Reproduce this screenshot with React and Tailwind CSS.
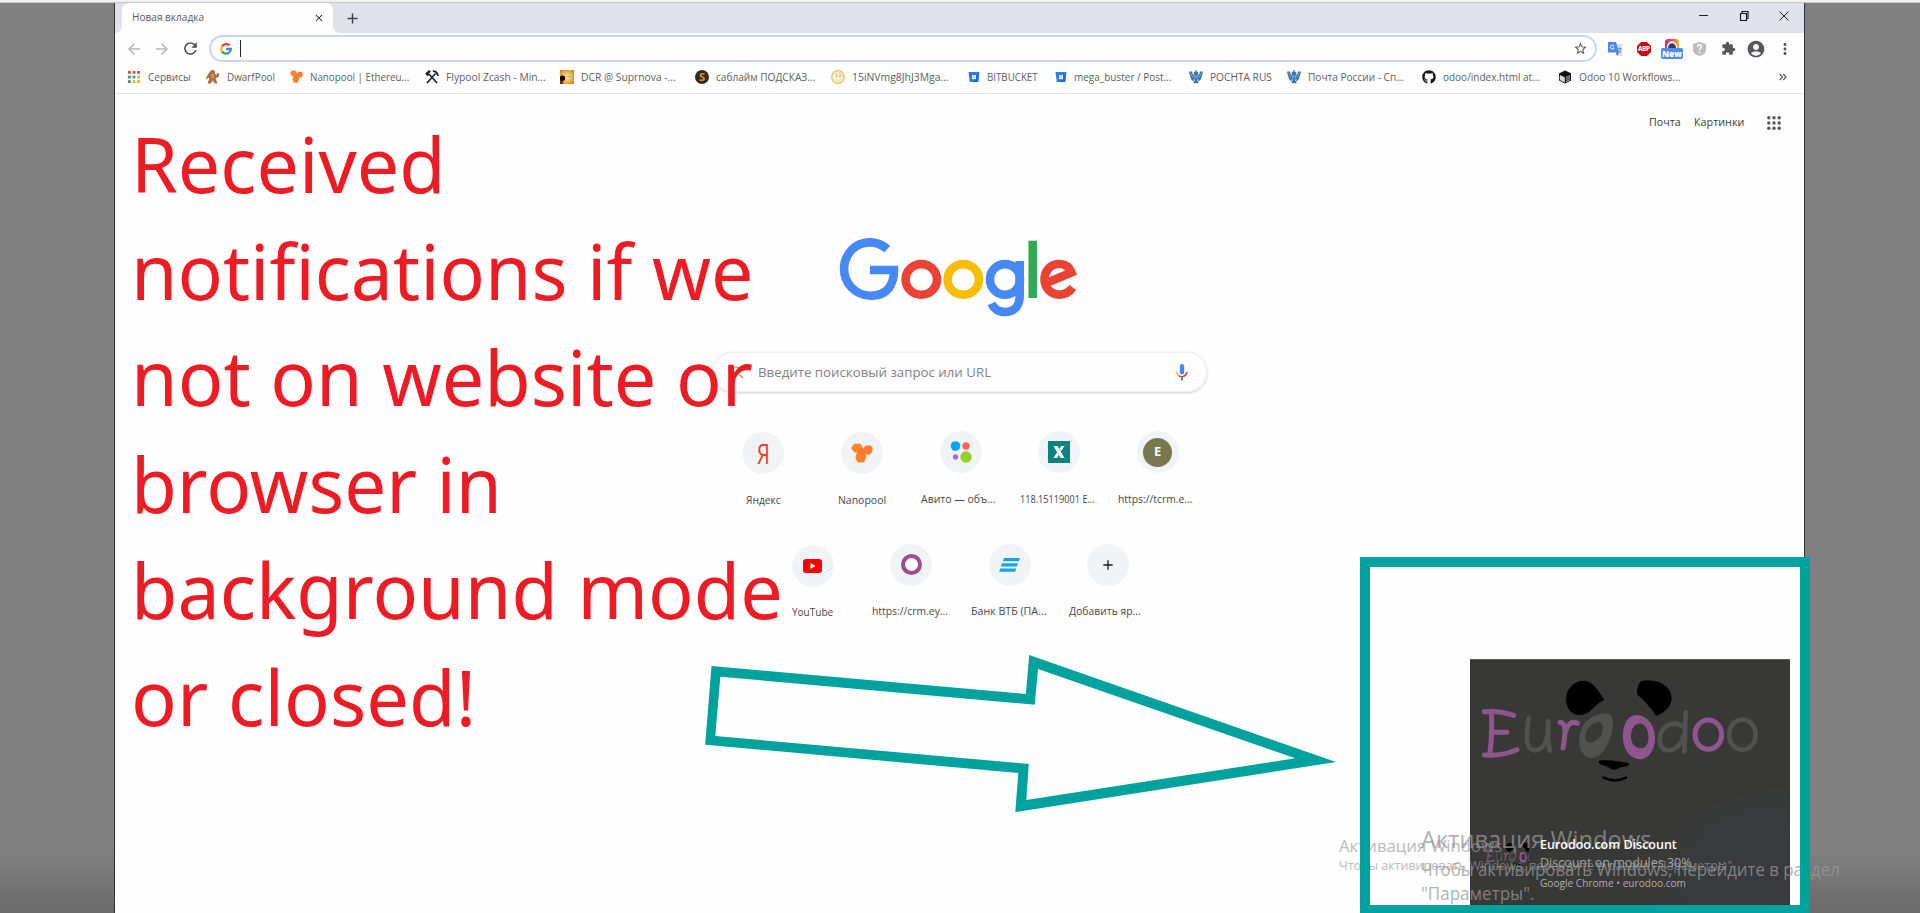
import { useLayoutEffect, useRef } from "react";
import {
  MdArrowBack,
  MdArrowForward,
  MdRefresh,
  MdStarBorder,
  MdExtension,
  MdAccountCircle,
  MdMoreVert,
  MdClose,
  MdAdd,
  MdSearch,
} from "react-icons/md";
import { FaGithub } from "react-icons/fa";

// One line of text, stretched sideways to the width its class gives.
function Fit({ className = "", children }) {
  const box = useRef(null);
  const inner = useRef(null);
  useLayoutEffect(() => {
    const ratio = box.current.getBoundingClientRect().width / inner.current.offsetWidth;
    inner.current.style.transform = `scaleX(${ratio})`;
  }, []);
  return (
    <span ref={box} className={`block shrink-0 whitespace-nowrap ${className}`}>
      <span ref={inner} className="inline-block origin-left">
        {children}
      </span>
    </span>
  );
}

function AppsColor() {
  const c = ["#e24a3b", "#e24a3b", "#e24a3b", "#3a9f58", "#3f87f0", "#efb213", "#3a9f58", "#efb213", "#efb213"];
  return (
    <svg viewBox="0 0 14 14" className="size-[14px]">
      {c.map((f, i) => (
        <rect key={i} x={1 + (i % 3) * 4.6} y={1 + Math.floor(i / 3) * 4.6} width="2.8" height="2.8" fill={f} />
      ))}
    </svg>
  );
}

function Dwarf() {
  return (
    <svg viewBox="0 0 14 14" className="size-[14px]">
      <path
        d="M4 1.500L5.500 0h2L9 1.500V4l1.500 1 .5-2 2 .5V6l-1.500 1.500L9.500 8l2 5.500h-3L7 10.500 4.500 13.500H1.500l2-5.500-1.500 0-1.500 1.500L0 8l2-3.500z"
        fill="#a8713f"
      />
      <path d="M5 4h3v4H5z" fill="#c9955d" />
    </svg>
  );
}

function Nano({ className }) {
  return (
    <svg viewBox="0 0 20 20" className={className} preserveAspectRatio="none">
      <path d="M3 .8h5.500L11 5l-2 4.500H3L0 5z" fill="#f98432" />
      <path d="M13 2.500h5l2 3.500-2 5.500h-5.500l-2-4z" fill="#ff7d2a" />
      <path d="M5.500 9h7l1.500 4.500-2 6H6l-2-4.500z" fill="#fc7f2c" />
      <path d="M8 4.500l5 1.500-2 6-5-3z" fill="#ff7a24" />
    </svg>
  );
}

function Hammers() {
  return (
    <svg viewBox="0 0 14 14" className="size-[14px]" stroke="#222" fill="none">
      <path d="M2 13L10.500 3.500M12 13L4 4" strokeWidth="1.700" />
      <path d="M1 4.500L5 .8M1.500 3.500l2 2" strokeWidth="2.400" />
      <path d="M7.800 1.200c2.500-.4 4.800 1.600 5.200 4.800" strokeWidth="1.700" />
    </svg>
  );
}

function Eclipse() {
  return (
    <svg viewBox="0 0 14 14" className="size-[14px]">
      <defs>
        <radialGradient id="glow" cx=".5" cy=".5" r=".7">
          <stop offset="0" stopColor="#fff2bd" />
          <stop offset=".5" stopColor="#efb450" />
          <stop offset="1" stopColor="#cc7614" />
        </radialGradient>
      </defs>
      <rect width="14" height="14" fill="url(#glow)" />
      <path d="M0 8h3v6H0z" fill="#6b3310" />
      <circle cx="2.500" cy="8.300" r="2.700" fill="#160b04" />
      <path d="M6 6.500h6" stroke="#b9a06c" strokeWidth=".8" />
    </svg>
  );
}

function Sublime() {
  return (
    <span className="flex size-[14px] items-center justify-center rounded-full bg-[#2c2b27] text-[11px] leading-none font-bold text-[#f08c22]">
      S
    </span>
  );
}

function Coin() {
  return (
    <svg viewBox="0 0 14 14" className="size-[14px]" fill="none" stroke="#ecbe5a">
      <circle cx="7" cy="7" r="6.300" strokeWidth="1.200" />
      <circle cx="7" cy="7" r="4.800" strokeWidth=".5" />
      <path d="M5.300 3.800v3.200M8.700 3.800v3.200M4.500 4h1.700v3H4.500M8 4h1.700v3H8M4.200 9c1.500 1.700 4.100 1.700 5.600 0" strokeWidth=".9" />
    </svg>
  );
}

function Bucket() {
  return (
    <svg viewBox="0 0 14 14" className="size-[14px]">
      <path d="M1.500 2h11l-1.300 10H2.800z" fill="#2a7cf2" />
      <path d="M9.500 5h2.600l-.9 7H6z" fill="#1761d6" opacity=".7" />
      <rect x="5" y="5.200" width="4" height="4" fill="#f4f8ff" />
      <rect x="6" y="6.200" width="1.800" height="2" fill="#a9c9fa" />
    </svg>
  );
}

function Eagle() {
  return (
    <svg viewBox="0 0 14 14" className="size-[14px]" stroke="#2f6fae" fill="none">
      <path d="M.8 1.500c.3 4 1.500 6 3.800 7.500M2.300 1.500c.3 3 1 4.500 2.700 6M13.200 1.500c-.3 4-1.500 6-3.800 7.500M11.700 1.500c-.3 3-1 4.500-2.700 6M2 6.500c.5 2.500 1.500 3.500 2.800 4M12 6.500c-.5 2.500-1.500 3.500-2.800 4" strokeWidth="1.400" />
      <path d="M7 .3v13M5 2.300l1.300 1.500M9 2.300L7.700 3.800M4.800 13l2.200-3 2.200 3" strokeWidth="1.500" />
      <path d="M5 4.500h4v4L7 10 5 8.500z" strokeWidth="1.200" />
    </svg>
  );
}

function Cube() {
  return (
    <svg viewBox="0 0 14 14" className="size-[14px]">
      <path d="M7 .6l6 2.600v7.200L7.200 13.500 1 10.600V3.400z" fill="#111" />
      <path d="M1.800 5l5 2.200v5.200l-5-2.300z" fill="#d9d9d9" />
      <path d="M8 7.500l4.200-2M8 9.500l4.200-2M8 11.500l4.200-2" stroke="#eee" strokeWidth=".8" />
    </svg>
  );
}

const bookmarks = [
  { cell: "w-[79px]", text: "w-[43px]", label: "Сервисы", icon: <AppsColor /> },
  { cell: "w-[83px]", text: "w-[48px]", label: "DwarfPool", icon: <Dwarf /> },
  { cell: "w-[136px]", text: "w-[99px]", label: "Nanopool | Ethereu...", icon: <Nano className="size-[13px]" /> },
  { cell: "w-[135px]", text: "w-[100px]", label: "Flypool Zcash - Min...", icon: <Hammers /> },
  { cell: "w-[135px]", text: "w-[95px]", label: "DCR @ Suprnova -...", icon: <Eclipse /> },
  { cell: "w-[136px]", text: "w-[99px]", label: "саблайм ПОДСКАЗ...", icon: <Sublime /> },
  { cell: "w-[135.5px]", text: "w-[97px]", label: "15iNVmg8JhJ3Mga...", icon: <Coin /> },
  { cell: "w-[87px]", text: "w-[51px]", label: "BITBUCKET", icon: <Bucket /> },
  { cell: "w-[135.5px]", text: "w-[98px]", label: "mega_buster / Post...", icon: <Bucket /> },
  { cell: "w-[98px]", text: "w-[62px]", label: "POCHTA RUS", icon: <Eagle /> },
  { cell: "w-[135px]", text: "w-[96px]", label: "Почта России - Сп...", icon: <Eagle /> },
  { cell: "w-[136px]", text: "w-[97px]", label: "odoo/index.html at...", icon: <FaGithub className="size-[14px] text-[#191717]" /> },
  { cell: "w-[130px]", text: "w-[101px]", label: "Odoo 10 Workflows...", icon: <Cube /> },
];

function GoogleG() {
  return (
    <svg viewBox="0 0 24 24" className="h-[12px] w-[12px]" fill="none" strokeWidth="4.600">
      <path d="M4 7a9.700 9.700 0 0 1 15-2.200" stroke="#ea4335" />
      <path d="M4 17a9.700 9.700 0 0 1 0-10" stroke="#fbbc05" />
      <path d="M18.500 18.800A9.700 9.700 0 0 1 4 17" stroke="#34a853" />
      <path d="M12 12h9.700a9 9 0 0 1-3.200 6.800" stroke="#4285f4" />
    </svg>
  );
}

function TabStrip() {
  return (
    <div className="flex h-[30px] bg-[#e1e1ea]">
      <div className="w-[7px] bg-[#fefefe]">
        <div className="h-full rounded-br-[7px] bg-[#e1e1ea]" />
      </div>
      <div className="flex w-[211px] items-center justify-between rounded-t-[7px] bg-[#fefefe] pr-[8px] pl-[10px]">
        <Fit className="w-[72px] text-[10.5px] text-[#5a5d61]">Новая вкладка</Fit>
        <MdClose className="size-[12px] text-[#3c4043]" />
      </div>
      <div className="w-[7px] bg-[#fefefe]">
        <div className="h-full rounded-bl-[7px] bg-[#e1e1ea]" />
      </div>
      <div className="flex w-[25px] items-center justify-center">
        <MdAdd className="size-[17px] text-[#3c4043]" />
      </div>
      <div className="flex-1" />
      <div className="flex w-[106px] justify-between pt-[8px] pr-[15px]">
        <svg viewBox="0 0 10 10" className="size-[10px]" stroke="#222" fill="none">
          <path d="M1 4.500h9" />
        </svg>
        <svg viewBox="0 0 10 10" className="size-[10px]" stroke="#111" fill="none">
          <path d="M1.500 2.500h6v7h-6zM3 2.500V.5h6v7H7.500" strokeWidth="1.100" />
        </svg>
        <svg viewBox="0 0 10 10" className="size-[10px]" stroke="#222" fill="none">
          <path d="M.5 .5l9 9M9.500 .5l-9 9" />
        </svg>
      </div>
    </div>
  );
}

function Toolbar() {
  return (
    <div className="flex h-[31px] items-center">
      <div className="flex w-[94px] items-center gap-[10px] pl-[10px]">
        <MdArrowBack className="size-[18px] text-[#b5b7ba]" />
        <MdArrowForward className="size-[18px] text-[#b5b7ba]" />
        <MdRefresh className="size-[19px] text-[#4d5156]" />
      </div>
      <div className="flex h-[27px] w-[1388px] items-center rounded-full border-2 border-[#c4d8f3] pr-[7px] pl-[9px]">
        <GoogleG />
        <div className="ml-[8px] h-[17px] w-px bg-[#222]" />
        <div className="flex-1" />
        <MdStarBorder className="size-[15px] text-[#4d5156]" />
      </div>
      <svg viewBox="0 0 15 14" className="ml-[11px] h-[14px] w-[15px]">
        <path d="M6 2h8.500v12H9z" fill="#dcdfe3" />
        <path d="M0 0h8l3 10.500H0z" fill="#4a87ee" />
        <path d="M8 10.500h3l-2 3.500z" fill="#2f5fd0" />
        <path d="M6 4a2 2 0 1 0 .2 2H4.500" stroke="#fff" fill="none" />
        <path d="M9.500 6.500h4M11.500 5.500v1M13 7c-.5 2-2 3-3 3.500M10.500 8l2.500 3" stroke="#6d7a90" fill="none" strokeWidth=".9" />
      </svg>
      <svg viewBox="0 0 14 14" className="ml-[14px] size-[14px]">
        <path d="M4.100 0h5.800L14 4.100v5.800L9.900 14H4.100L0 9.900V4.100z" fill="#c70d12" />
        <text x="7" y="9.300" textAnchor="middle" textLength="12" fontSize="6.500" fontWeight="700" fill="#fff" fontFamily="Open Sans">
          ABP
        </text>
      </svg>
      <div className="ml-[10px] flex h-[20px] w-[22px] flex-col items-center">
        <svg viewBox="0 0 14 9" className="h-[9px] w-[14px]">
          <defs>
            <linearGradient id="cam">
              <stop offset="0" stopColor="#d6249f" />
              <stop offset=".5" stopColor="#ef4a4a" />
              <stop offset="1" stopColor="#fdb32c" />
            </linearGradient>
          </defs>
          <path d="M0 9V2l2-2h10l2 2v7z" fill="url(#cam)" />
          <path d="M2 9c0-9 10-9 10 0z" fill="#fff" />
          <path d="M3 9c0-6.500 8-6.500 8 0z" fill="#31414f" />
        </svg>
        <span className="h-[11px] w-[22px] rounded-[2px] bg-[#4d8bf5] text-center text-[8.5px] leading-[11px] font-extrabold text-white">New</span>
      </div>
      <svg viewBox="0 0 13 14" className="ml-[10px] h-[14px] w-[13px]">
        <path d="M6.500 0L13 2v6c0 3-3 5-6.500 6C3 13 0 11 0 8V2z" fill="#bdbdbd" />
        <path d="M4.500 5c0-3 4-2.800 4-.5 0 1.700-2 1.600-2 3.500M6.500 9.500v1.500" stroke="#fff" strokeWidth="1.400" fill="none" />
      </svg>
      <MdExtension className="ml-[15px] size-[15px] text-[#54585d]" />
      <MdAccountCircle className="ml-[10px] size-[20px] text-[#54585d]" />
      <MdMoreVert className="ml-[10px] size-[18px] text-[#54585d]" />
    </div>
  );
}

function BookmarksBar() {
  return (
    <div className="flex h-[30px] items-center border-b border-[#e4e6e9] pb-[4px] pl-[12px]">
      {bookmarks.map((b) => (
        <div key={b.label} className={`flex shrink-0 items-center gap-[6.5px] ${b.cell}`}>
          <span className="flex size-[14px] shrink-0 items-center justify-center">{b.icon}</span>
          <Fit className={`text-[10.5px] leading-[16px] text-[#5c5e62] ${b.text}`}>{b.label}</Fit>
        </div>
      ))}
      <div className="flex flex-1 justify-end pr-[17px]">
        <svg viewBox="0 0 8 8" className="size-[8px]" stroke="#54585d" fill="none">
          <path d="M.8 1l2.700 3L.8 7M4.300 1L7 4 4.300 7" strokeWidth="1.200" />
        </svg>
      </div>
    </div>
  );
}

function GoogleLogo() {
  return (
    <svg viewBox="840 238 238 80" className="mr-[3px] h-[80px] w-[238px]" fill="none" strokeWidth="8.600" role="img" aria-label="Google">
      <path d="M888.200 249.200C878 239.500 862 240.500 853 249.500A27.500 27.500 0 0 0 852 287C863 299 882 298 890 288Q895 281 895 270H871" stroke="#4688f4" />
      <ellipse cx="922.300" cy="279.400" rx="15.700" ry="15.300" stroke="#ea4335" />
      <ellipse cx="964.300" cy="279.400" rx="15.700" ry="15.300" stroke="#fbbc05" />
      <ellipse cx="1006" cy="279.400" rx="15" ry="15.300" stroke="#4688f4" />
      <path d="M1020.700 261V296C1020.700 306 1015 312 1006 312C999.500 312 995 309 992.500 303.500" stroke="#4688f4" />
      <path d="M1033.700 240.700V298" stroke="#34a853" />
      <path d="M1048.500 282.500L1072.500 272.500C1070 266.500 1066 264 1060.500 264C1051 264 1045.500 271 1045.500 279.500C1045.500 288 1052 294.600 1060.500 294.600C1066 294.600 1070.500 292 1073.800 287.500" stroke="#ea4335" />
    </svg>
  );
}

const rowOne = [
  { label: "Яндекс", w: "w-[35px]", drop: "pt-[1px]", icon: <Fit className="w-[13px] text-[28px] leading-none text-[#e2401f]">Я</Fit> },
  { label: "Nanopool", w: "w-[48px]", drop: "pt-[1px]", icon: <Nano className="h-[20px] w-[22px]" /> },
  {
    label: "Авито — объ...",
    w: "w-[75px] mr-[4px]",
    drop: "",
    icon: (
      <svg viewBox="0 0 22 22" className="size-[22px]">
        <circle cx="5.500" cy="5" r="4.800" fill="#00a6f6" />
        <circle cx="16" cy="5" r="3.700" fill="#ff6163" />
        <circle cx="5.500" cy="16" r="2.700" fill="#a169f7" />
        <circle cx="16" cy="16" r="5.700" fill="#96cf26" />
      </svg>
    ),
  },
  {
    label: "118.15119001 E...",
    w: "w-[75px] mr-[4px]",
    drop: "",
    icon: (
      <svg viewBox="0 0 22 22" className="size-[22px]">
        <rect width="22" height="22" fill="#08837f" />
        <path d="M5.500 5h4l7 12h-4zM13 5h3.500l-3.300 5.300-1.800-2.500zM5.500 17H9l2-3.200-1.700-2.800z" fill="#fff" />
      </svg>
    ),
  },
  {
    label: "https://tcrm.e...",
    w: "w-[75px] mr-[4px]",
    drop: "",
    icon: <span className="flex size-[29px] items-center justify-center rounded-full bg-[#78784f] text-[13px] font-bold text-white">E</span>,
  },
];

const rowTwo = [
  {
    label: "YouTube",
    w: "w-[41px]",
    drop: "pt-[1px]",
    icon: (
      <svg viewBox="0 0 19 14" className="h-[14px] w-[19px]">
        <rect width="19" height="14" rx="3.200" fill="#fe0000" />
        <path d="M7.500 4l5 3-5 3z" fill="#fff" />
      </svg>
    ),
  },
  { label: "https://crm.ey...", w: "w-[76px] mr-[2px]", drop: "", icon: <span className="size-[21px] rounded-full border-[4.5px] border-[#a04b8c] bg-white" /> },
  {
    label: "Банк ВТБ (ПА...",
    w: "w-[75px] mr-[3px]",
    drop: "",
    icon: (
      <svg viewBox="0 0 21 14" className="h-[14px] w-[21px]" fill="#18a4e4">
        <path d="M5 0h16l-1.200 3.200H3.800zM3 5.300h16l-1.200 3.200H1.800zM1.300 10.600h16L16.100 13.800H0z" />
      </svg>
    ),
  },
  { label: "Добавить яр...", w: "w-[72px] mr-[6px]", drop: "", icon: <MdAdd className="size-[16px] text-[#1d1f21]" /> },
];

function Shortcuts({ items }) {
  return (
    <div className="flex h-[112.5px] justify-center">
      {items.map((s) => (
        <div key={s.label} className={`flex w-[98.6px] flex-col items-center ${s.drop}`}>
          <span className="flex size-[42px] items-center justify-center rounded-full bg-[#f0f4f6]">{s.icon}</span>
          <Fit className={`mt-[17.5px] text-[10.5px] leading-[16px] font-medium text-[#46484c] ${s.w}`}>{s.label}</Fit>
        </div>
      ))}
    </div>
  );
}

function NewTabPage() {
  return (
    <div className="flex flex-1 flex-col items-center overflow-hidden">
      <div className="flex h-[57px] w-full items-center justify-end pr-[23px]">
        <Fit className="mr-[13px] w-[32px] text-[11px] text-[#3d3a40]">Почта</Fit>
        <Fit className="mr-[23px] w-[50px] text-[11px] text-[#3d3a40]">Картинки</Fit>
        <svg viewBox="0 0 14 14" className="size-[14px]" fill="#54585d">
          {[0, 1, 2].map((r) => [0, 1, 2].map((c) => <circle key={`${r}${c}`} cx={1.800 + c * 5.200} cy={1.800 + r * 5.200} r="1.700" />))}
        </svg>
      </div>
      <div className="mt-[87px] flex flex-col items-center">
        <GoogleLogo />
        <div className="mt-[34px] flex h-[40px] w-[494px] items-center rounded-full border border-[#ebedef] pr-[18px] pl-[15px] shadow-[0_1px_3px_rgba(60,64,67,0.25)]">
          <MdSearch className="size-[17px] text-[#9aa0a6]" />
          <Fit className="ml-[12px] w-[233px] text-[13.5px] text-[#808386]">Введите поисковый запрос или URL</Fit>
          <div className="flex-1" />
          <svg viewBox="0 0 12 17" className="h-[17px] w-[12px]" fill="none">
            <rect x="3.800" y="0" width="4.400" height="10.500" rx="2.200" fill="#4688f4" />
            <path d="M1 7.500c0 2 .6 3.300 1.500 4" stroke="#fbbc05" strokeWidth="1.600" />
            <path d="M2.500 11.500c2.500 2.200 7.500 1.500 8.500-3.500" stroke="#ea4335" strokeWidth="1.600" />
            <path d="M6 13v3.500" stroke="#34a853" strokeWidth="1.800" />
          </svg>
        </div>
        <div className="mt-[39px] ml-[2px]">
          <Shortcuts items={rowOne} />
          <Shortcuts items={rowTwo} />
        </div>
      </div>
    </div>
  );
}

function Panda({ className }) {
  return (
    <svg viewBox="30 40 960 345" className={className} preserveAspectRatio="none" fill="none" strokeLinecap="round" strokeLinejoin="round" role="img" aria-label="Eurodoo">
      <path d="M372 63C395 63 415 90 433 121C400 135 395 165 358 166C335 166 318 145 318 118C318 85 345 63 372 63ZM548 63C600 58 635 80 635 118C632 145 605 165 588 168C575 145 540 110 532 105C528 85 538 65 548 63Z" fill="#000" />
      <g stroke="#8e568c" strokeWidth="15">
        <path d="M73 156Q120 152 161 167M94 158Q98 220 89 285M94 218H141M73 286Q130 289 171 270" />
        <path d="M300 188Q324 190 309 265M314 225Q325 178 352 191" />
        <ellipse cx="745" cy="225" rx="40" ry="44" />
      </g>
      <g stroke="#51514f" strokeWidth="14">
        <path d="M206 177C196 240 200 272 226 272C250 272 262 240 264 220M265 184Q262 240 269 273" />
        <path d="M667 200C640 180 600 200 599 238C599 290 660 280 672 225M677 158L673 276" />
        <ellipse cx="847" cy="225" rx="40" ry="45" />
      </g>
      <path fillRule="evenodd" d="M444 162C420 160 380 172 366 205C350 240 355 294 398 295C440 290 462 215 458 182Q457 164 444 162ZM418 187C390 190 372 215 376 240C385 253 405 248 418 235C432 218 432 190 418 187Z" fill="#51514f" />
      <path fillRule="evenodd" d="M528 167C500 168 488 200 489 235C490 275 515 299 542 299C572 296 587 262 585 232C583 195 560 166 528 167ZM536 192C518 194 512 215 513 235C515 255 528 266 545 266C562 262 567 245 565 225C562 202 550 190 536 192Z" fill="#8e568c" />
      <path d="M418 303C440 300 480 305 507 311C510 320 495 322 485 322C475 325 470 330 463 330C450 330 455 323 425 316C415 312 415 305 418 303Z" fill="#000" />
      <path d="M431 354Q465 370 498 354" stroke="#000" strokeWidth="8" />
    </svg>
  );
}

function Toast() {
  return (
    <div className="absolute top-[659px] left-[1470px] flex h-[247px] w-[320px] flex-col border-t border-[#5a5a58] bg-[#383836] bg-[radial-gradient(ellipse_at_100%_90%,#39393f_0%,#383b3c_22%,#383836_32%)]">
      <Panda className="mt-[13px] h-[115px] w-[320px]" />
      <div className="mt-[53px] ml-[13px] h-[29px] w-[46px] overflow-hidden">
        <Panda className="h-[29px] w-[76px]" />
      </div>
    </div>
  );
}

function ToastText() {
  return (
    <div className="absolute top-[835px] left-[1540px] flex flex-col">
      <Fit className="h-[18.5px] w-[137px] text-[12.5px] leading-[19px] font-semibold text-white">Eurodoo.com Discount</Fit>
      <Fit className="h-[19px] w-[152px] text-[12.5px] leading-[18px] text-[#a4a4a3]">Discount on modules 30%</Fit>
      <Fit className="h-[18px] w-[146px] text-[11px] leading-[19px] text-[#b0b0af]">Google Chrome • eurodoo.com</Fit>
    </div>
  );
}

function Watermarks() {
  return (
    <div className="text-[#999999]">
      <div className="absolute top-[834px] left-[1339px] opacity-65">
        <Fit className="h-[21px] w-[163px] text-[17px] leading-[24px]">Активация Windows</Fit>
        <Fit className="w-[397px] text-[13px] leading-[20px]">Чтобы активировать Windows, перейдите в раздел "Параметры".</Fit>
      </div>
      <div className="absolute top-[822px] left-[1421px] opacity-75">
        <Fit className="h-[35px] w-[230px] text-[23px] leading-[34px]">Активация Windows</Fit>
        <Fit className="h-[24px] w-[419px] text-[17.5px] leading-[24px]">Чтобы активировать Windows, перейдите в раздел</Fit>
        <Fit className="h-[24px] w-[113px] text-[17.5px] leading-[24px]">"Параметры".</Fit>
      </div>
    </div>
  );
}

function Headline() {
  return (
    <div className="absolute top-[111px] left-[131px] font-['Noto_Sans',sans-serif] text-[77px] leading-[106.5px] text-[#ed1c24]">
      <Fit className="w-[314px]">Received</Fit>
      <Fit className="w-[622px]">notifications if we</Fit>
      <Fit className="w-[622px]">not on website or</Fit>
      <Fit className="w-[371px]">browser in</Fit>
      <Fit className="w-[652px]">background mode</Fit>
      <Fit className="w-[345px]">or closed!</Fit>
    </div>
  );
}

export default function App() {
  return (
    <div className="relative flex h-[913px] w-[1920px] flex-col overflow-hidden bg-[#808080] font-['Open_Sans','Noto_Sans',sans-serif]">
      <div className="h-[3px] border-b border-[#c8c8c8] bg-[#f1f1f1]" />
      <div className="flex flex-1">
        <div className="w-[114px] bg-[linear-gradient(to_bottom,#808080_93%,#6b6b6b_100%)]" />
        <div className="flex w-[1691px] flex-col border-x border-[#303030] bg-[#fefefe]">
          <TabStrip />
          <Toolbar />
          <BookmarksBar />
          <NewTabPage />
        </div>
        <div className="flex-1 bg-[linear-gradient(to_bottom,#808080_93%,#6b6b6b_100%)]" />
      </div>
      <Headline />
      <svg viewBox="700 650 640 165" className="absolute top-[650px] left-[700px] h-[165px] w-[640px]" fill="#00a29e">
        <path
          fillRule="evenodd"
          d="M711.500 666L1025.900 694L1029.200 655L1336 762L1015.300 812L1018.300 773L705.200 744.700ZM720.300 676.700L1034.700 704.700L1038 669L1295.200 758.300L1026.300 800L1028.800 764L715.300 736Z"
        />
      </svg>
      <div className="absolute top-[557px] left-[1360px] h-[356px] w-[450px] bg-[#fefefe]" />
      <Toast />
      <Watermarks />
      <ToastText />
      <div className="absolute top-[557px] left-[1360px] h-[356px] w-[450px] border-[10px] border-b-8 border-[#00a29e]" />
    </div>
  );
}
